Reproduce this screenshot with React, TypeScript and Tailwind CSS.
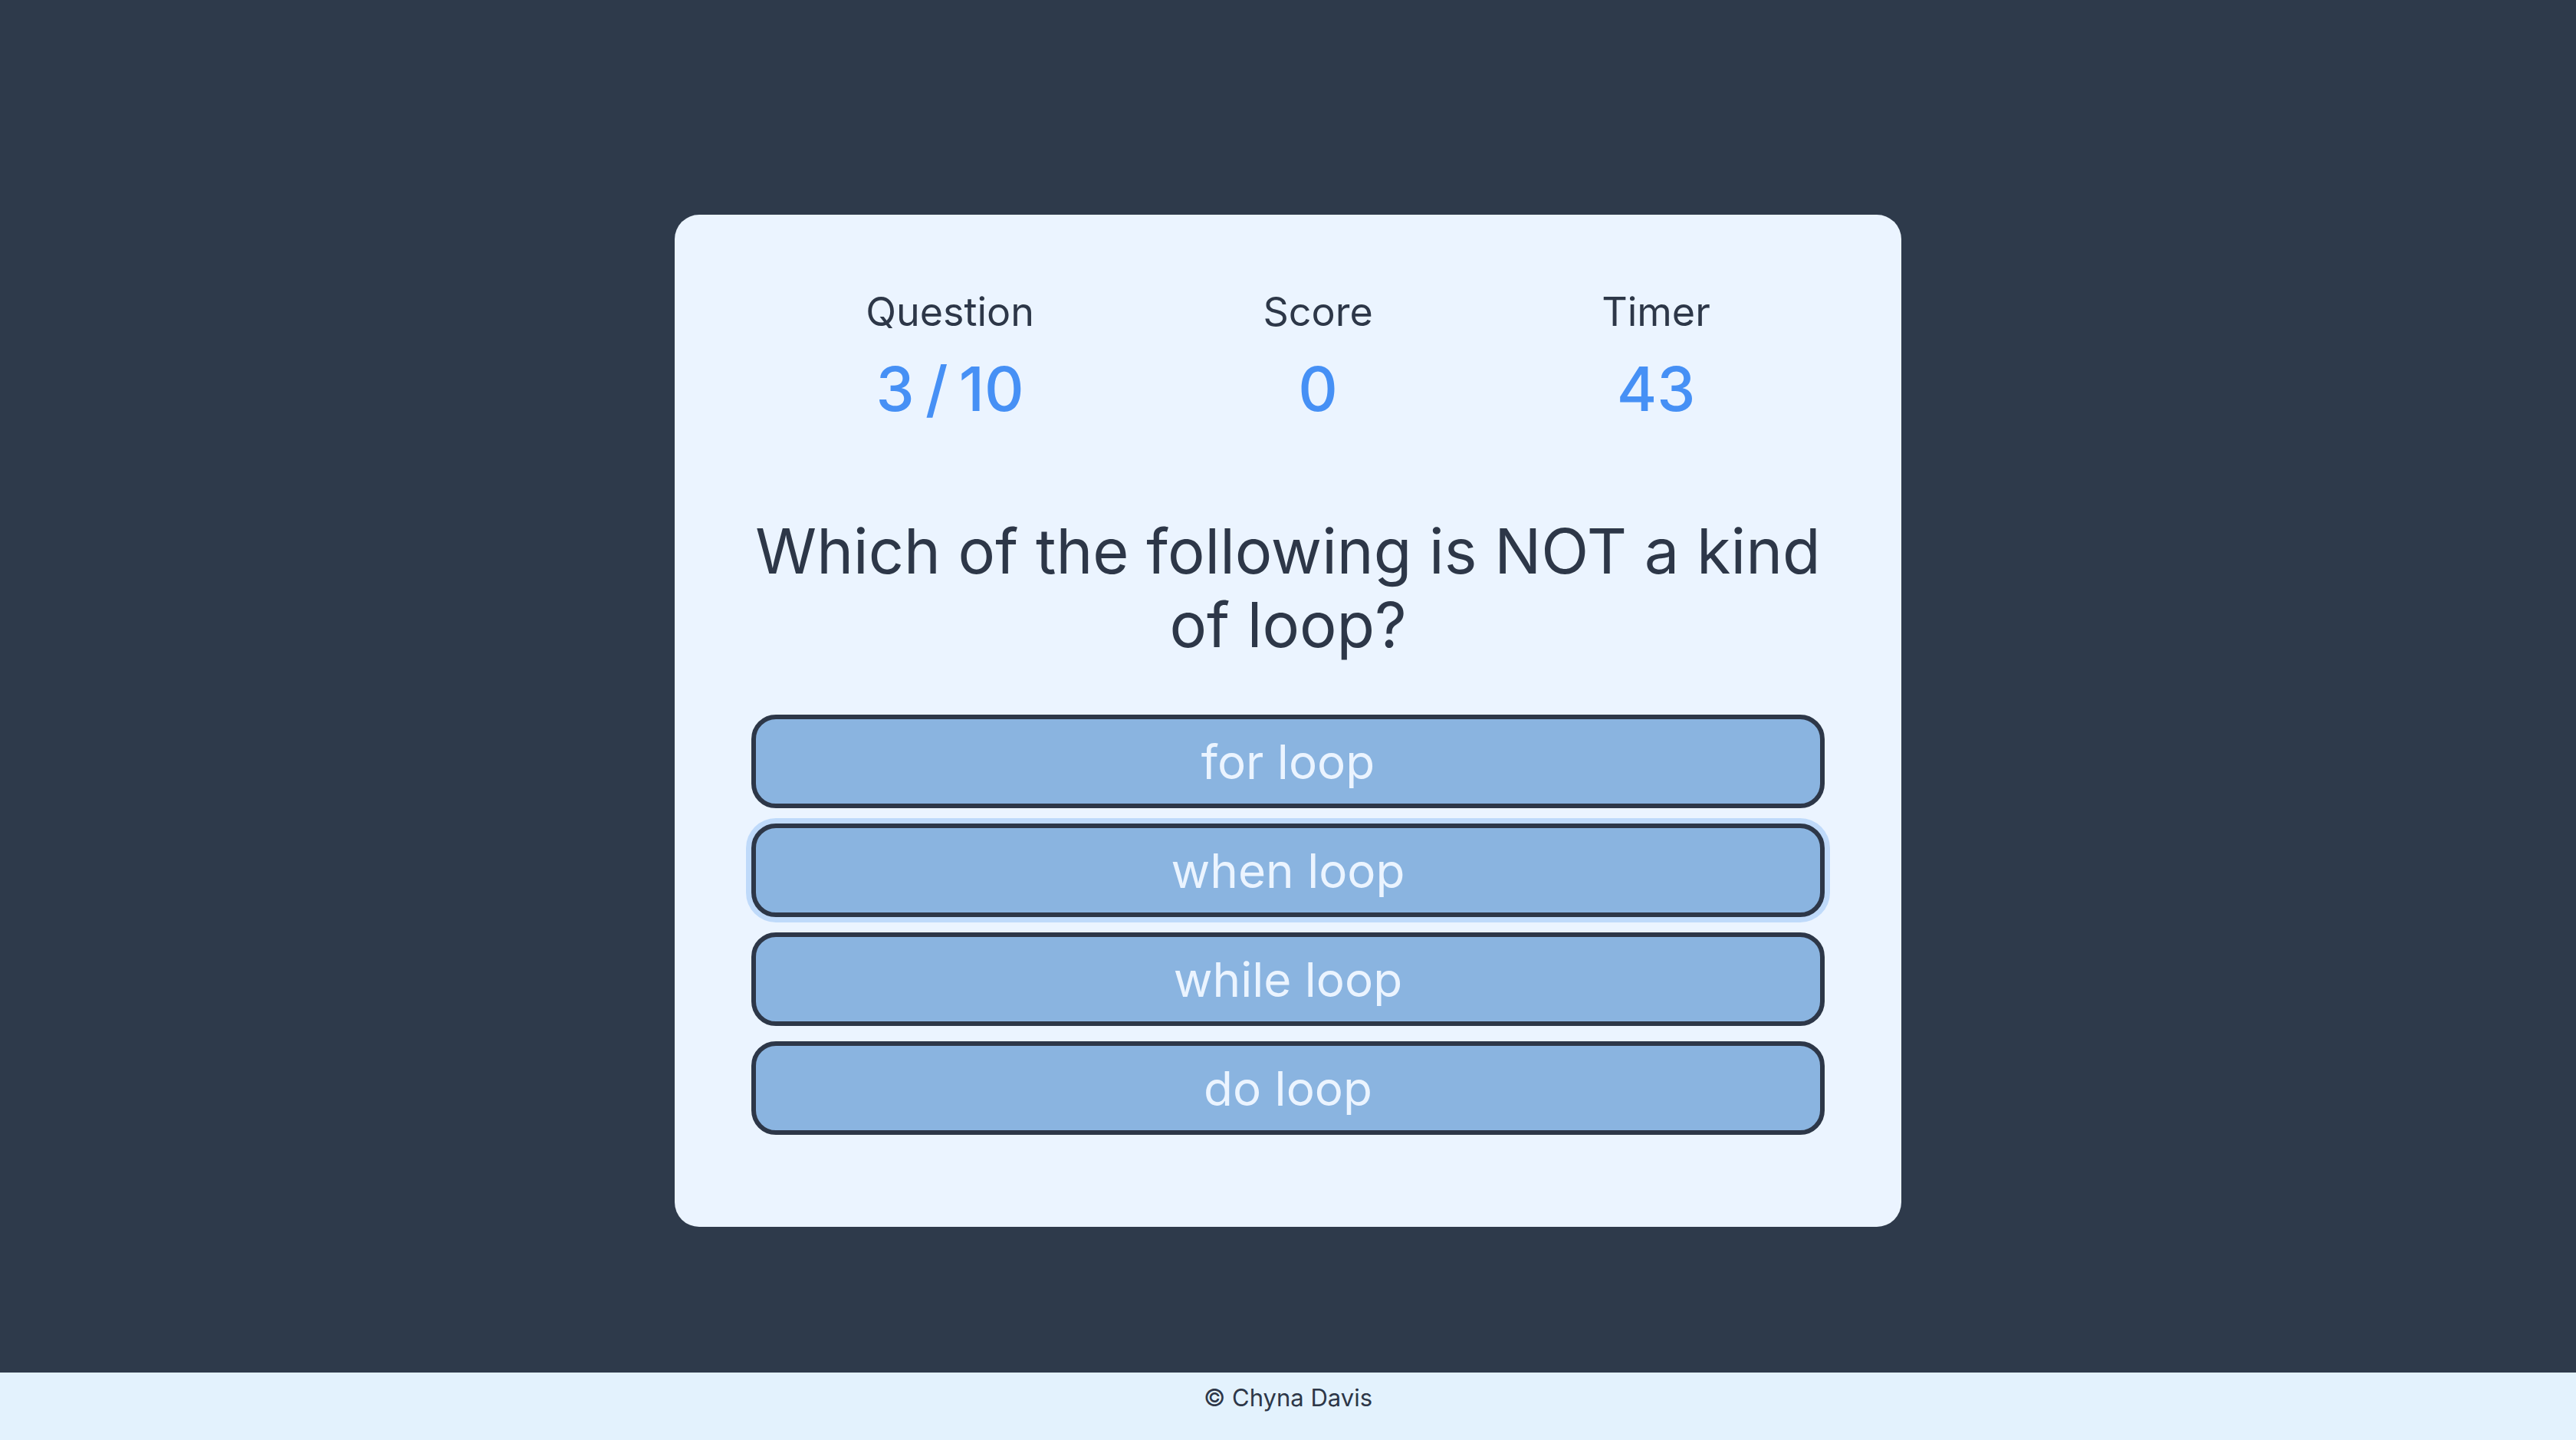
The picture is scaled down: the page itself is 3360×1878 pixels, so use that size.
import React from "react";

const font = { fontFamily: "Inter, 'Open Sans', sans-serif" };

function Stat({ label, value }: { label: string; value: string }) {
  return (
    <div className="flex flex-col items-center">
      <div className="text-[52px] leading-[78px] text-[#2d3748]">{label}</div>
      <div className="mt-[21px] text-[80px] leading-[80px] font-medium text-[#4690f5] [word-spacing:-7px]">{value}</div>
    </div>
  );
}

const answers = ["for loop", "when loop", "while loop", "do loop"];

export default function App() {
  return (
    <div className="min-h-screen flex flex-col bg-[#2e3a4b]" style={font}>
      <main className="flex-1 flex justify-center pt-[280px]">
        <div className="w-[1600px] h-[1320px] rounded-[32px] bg-[#ebf4ff] px-[100px] pt-[88px] pb-[120px] flex flex-col">
          <div className="flex justify-around">
            <Stat label="Question" value="3 / 10" />
            <Stat label="Score" value="0" />
            <Stat label="Timer" value="43" />
          </div>
          <h2 className="mt-[124px] text-center text-[81px] leading-[96px] text-[#2d3748]">
            Which of the following is NOT a kind of loop?
          </h2>
          <div className="mt-[69px] flex flex-col gap-[20px]">
            {answers.map((a, i) => (
              <button
                key={a}
                className={
                  "h-[122px] w-full rounded-[32px] border-[6px] border-[#2d3748] bg-[#8ab4e0] text-[62px] text-[#ebf4ff] " +
                  (i === 1 ? "shadow-[0_0_0_7px_#bfdafa]" : "")
                }
              >
                {a}
              </button>
            ))}
          </div>
        </div>
      </main>
      <footer className="h-[88px] bg-[#e3f2fd] flex justify-center pt-[15px] text-[31px] leading-[36px] text-[#2d3748]">
        © Chyna Davis
      </footer>
    </div>
  );
}
